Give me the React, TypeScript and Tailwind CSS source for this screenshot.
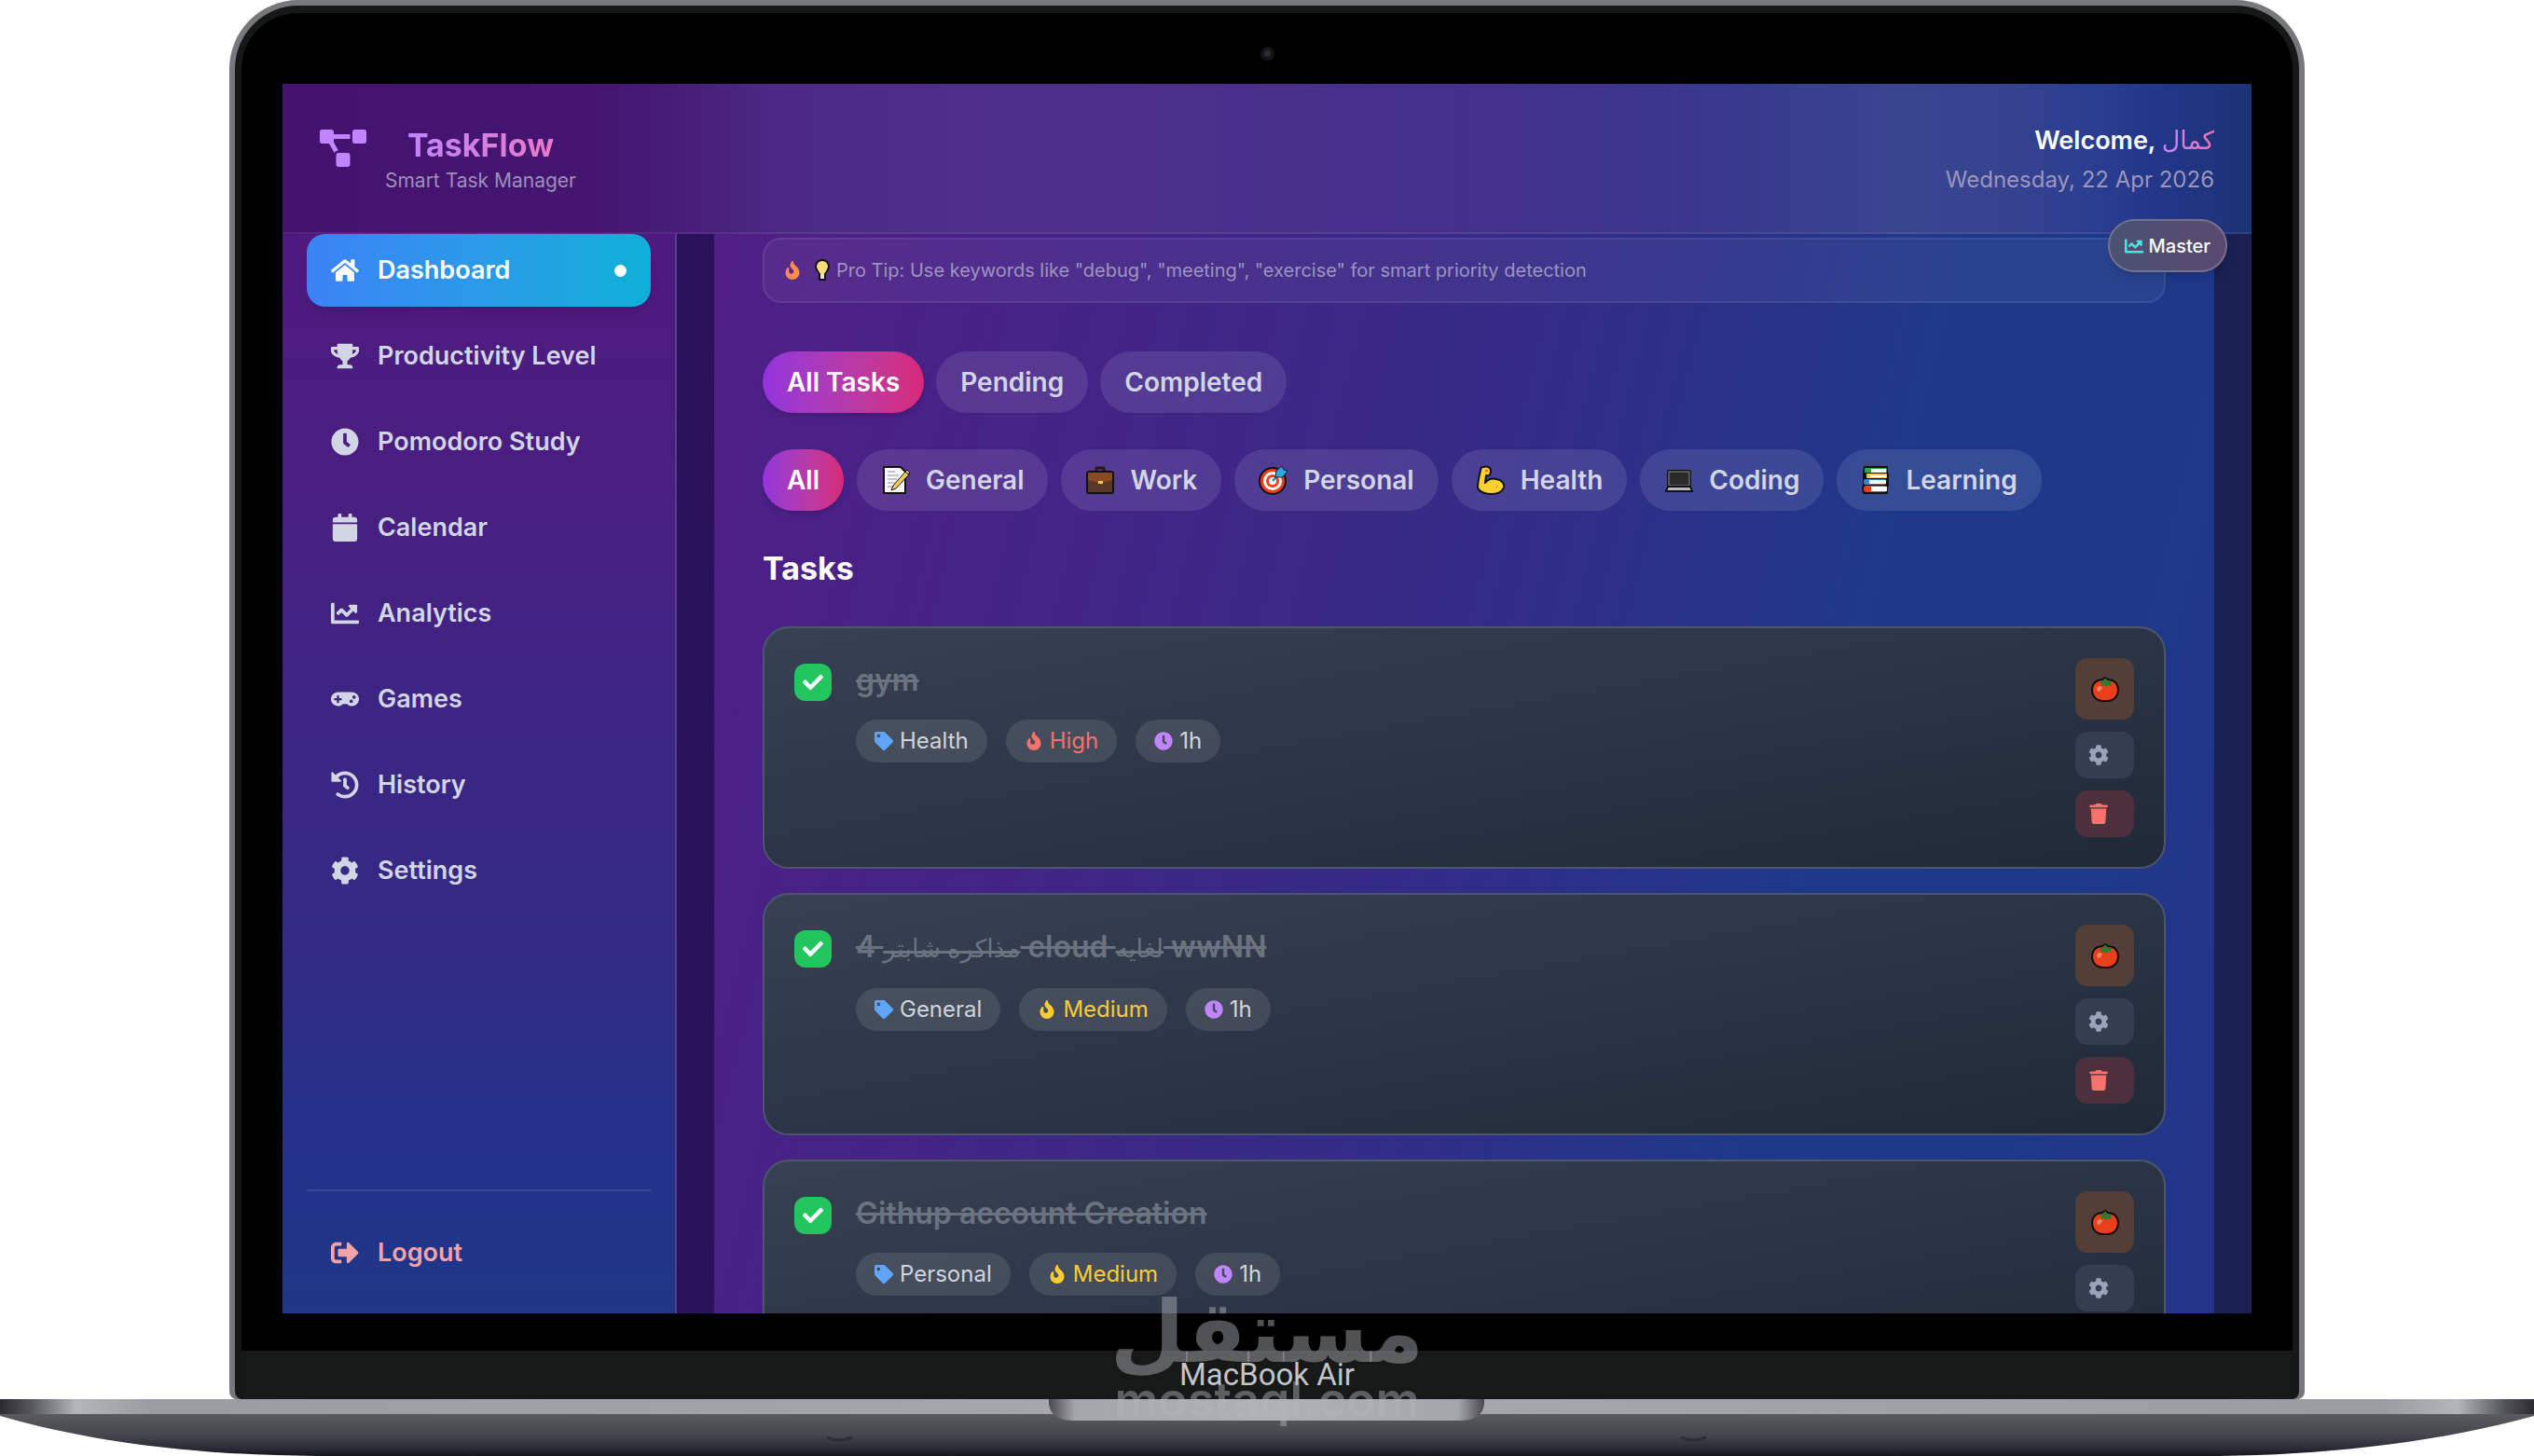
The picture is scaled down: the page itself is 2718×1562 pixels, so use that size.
import type { ReactNode } from "react";
import type { IconType } from "react-icons";
import {
	FaCalendar,
	FaChartLine,
	FaCheck,
	FaClock,
	FaCog,
	FaFire,
	FaGamepad,
	FaHistory,
	FaHome,
	FaProjectDiagram,
	FaSignOutAlt,
	FaTag,
	FaTrash,
	FaTrophy,
} from "react-icons/fa";

type NavItem = { label: string; icon: IconType; active?: boolean };

const navItems: NavItem[] = [
	{ label: "Dashboard", icon: FaHome, active: true },
	{ label: "Productivity Level", icon: FaTrophy },
	{ label: "Pomodoro Study", icon: FaClock },
	{ label: "Calendar", icon: FaCalendar },
	{ label: "Analytics", icon: FaChartLine },
	{ label: "Games", icon: FaGamepad },
	{ label: "History", icon: FaHistory },
	{ label: "Settings", icon: FaCog },
];

const statusFilters = ["All Tasks", "Pending", "Completed"];

const categories: { label: string; emoji?: ReactNode }[] = [
	{ label: "All" },
	{ label: "General", emoji: <MemoEmoji /> },
	{ label: "Work", emoji: <BriefcaseEmoji /> },
	{ label: "Personal", emoji: <TargetEmoji /> },
	{ label: "Health", emoji: <MuscleEmoji /> },
	{ label: "Coding", emoji: <LaptopEmoji /> },
	{ label: "Learning", emoji: <BooksEmoji /> },
];

type Task = {
	id: string;
	title: ReactNode;
	category: string;
	priority: "High" | "Medium";
	time: string;
};

const tasks: Task[] = [
	{ id: "t1", title: "gym", category: "Health", priority: "High", time: "1h" },
	{
		id: "t2",
		title: (
			<>
				4 <Arabic>مذاكره شابتر</Arabic> cloud <Arabic>لغايه</Arabic> wwNN
			</>
		),
		category: "General",
		priority: "Medium",
		time: "1h",
	},
	{
		id: "t3",
		title: "Githup account Creation",
		category: "Personal",
		priority: "Medium",
		time: "1h",
	},
];

function Arabic({ children }: { children: ReactNode }) {
	return (
		<span lang="ar" className="font-normal text-[27px]">
			{children}
		</span>
	);
}

function MemoEmoji() {
	return (
		<svg viewBox="0 0 32 32" className="size-8" aria-hidden="true">
			<path
				d="M3 2h18l5 5v23H3z"
				fill="#f7f7f7"
				stroke="#111"
				strokeWidth="2"
				strokeLinejoin="round"
			/>
			<path
				d="M7 7h8M7 11h12M7 15h10M7 19h8M7 23h6"
				stroke="#b3b7c4"
				strokeWidth="1.5"
			/>
			<path
				d="M11 27l2-5L27 6l4 3-15 16z"
				fill="#f2cf5b"
				stroke="#111"
				strokeWidth="1"
				strokeLinejoin="round"
			/>
			<path d="M26 7l2-2 3 3-2 2z" fill="#e9a08c" stroke="#111" />
		</svg>
	);
}

function BriefcaseEmoji() {
	return (
		<svg viewBox="0 0 32 32" className="size-8" aria-hidden="true">
			<path
				d="M12 7V3h8v4"
				fill="none"
				stroke="#2a1a14"
				strokeWidth="3"
				strokeLinejoin="round"
			/>
			<rect
				x="2"
				y="7"
				width="28"
				height="23"
				rx="2"
				fill="#573829"
				stroke="#111"
				strokeWidth="2"
			/>
			<path d="M3 8h26v8l-11 3h-4L3 16z" fill="#8a4b22" />
			<rect x="14" y="17" width="5" height="3" fill="#f6c84c" />
		</svg>
	);
}

function TargetEmoji() {
	return (
		<svg viewBox="0 0 32 32" className="size-8" aria-hidden="true">
			<circle
				cx="15"
				cy="17"
				r="14"
				fill="#e8401c"
				stroke="#111"
				strokeWidth="2"
			/>
			<circle cx="15" cy="17" r="10" fill="#fff" />
			<circle cx="15" cy="17" r="7" fill="#e8401c" />
			<circle cx="15" cy="17" r="4" fill="#fff" />
			<path d="M15 17l7-8" stroke="#1c7fb0" strokeWidth="2" />
			<path
				d="M18 13l1-7 6-5 2 4 4 1-5 7z"
				fill="#2fa8e0"
				stroke="#123"
				strokeWidth="1"
			/>
		</svg>
	);
}

function MuscleEmoji() {
	return (
		<svg viewBox="0 0 32 32" className="size-8" aria-hidden="true">
			<path
				d="M8 2c4-1 8 0 8 4 0 4-1 6-5 5l-1 8c3-4 8-5 12-4 6 1 9 5 8 9-2 5-8 7-14 7-7 0-13-3-14-7C2 18 4 10 5 6c0-2 1-4 3-4z"
				fill="#fccf33"
				stroke="#111"
				strokeWidth="2"
				strokeLinejoin="round"
			/>
			<path d="M10 6h3M22 23h1" stroke="#e8662a" strokeWidth="2" fill="none" />
		</svg>
	);
}

function LaptopEmoji() {
	return (
		<svg viewBox="0 0 32 32" className="size-8" aria-hidden="true">
			<rect
				x="4"
				y="6"
				width="24"
				height="17"
				rx="1"
				fill="#2b2b2b"
				stroke="#111"
				strokeWidth="2"
			/>
			<rect
				x="5"
				y="7"
				width="22"
				height="15"
				fill="none"
				stroke="#8f8f92"
				strokeWidth="1"
			/>
			<path
				d="M4 23h24l2 5H2z"
				fill="#b9b9bd"
				stroke="#111"
				strokeWidth="2"
				strokeLinejoin="round"
			/>
		</svg>
	);
}

function BooksEmoji() {
	return (
		<svg viewBox="0 0 32 32" className="size-8" aria-hidden="true">
			<path
				d="M4 2h24v7h1v5h-1v2h1v6h-1v8H3l-1-5 1-4V9z"
				fill="#111"
				stroke="#111"
				strokeWidth="2"
				strokeLinejoin="round"
			/>
			<rect x="4" y="3" width="24" height="5" rx="1" fill="#2ea44f" />
			<rect x="11" y="4" width="16" height="4" fill="#fff" />
			<rect x="6" y="9" width="22" height="5" rx="1" fill="#f6c84c" />
			<rect x="10" y="11" width="17" height="2" fill="#fff" />
			<rect x="3" y="15" width="24" height="6" rx="2" fill="#2f86e0" />
			<rect x="9" y="16" width="18" height="4" fill="#fff" />
			<rect x="3" y="22" width="25" height="7" rx="3" fill="#e8401c" />
			<rect x="11" y="23" width="17" height="5" fill="#fff" />
		</svg>
	);
}

function BulbEmoji() {
	return (
		<svg viewBox="0 0 16 24" className="h-6 w-4" aria-hidden="true">
			<path
				d="M8 1c4 0 7 3 7 7 0 3-2 5-4 8v6H5v-6C3 13 1 11 1 8c0-4 3-7 7-7z"
				fill="#fbdc7a"
				stroke="#111"
				strokeWidth="2"
			/>
			<path d="M6 17h4v4H6z" fill="#e4e4e4" />
		</svg>
	);
}

function TomatoEmoji() {
	return (
		<svg viewBox="0 0 30 28" className="h-7 w-[30px]" aria-hidden="true">
			<path
				d="M15 2l3 2 5 1c4 2 6 6 6 10 0 7-5 12-11 12h-6C6 27 1 22 1 15 1 11 3 7 7 5l5-1z"
				fill="#e8401c"
				stroke="#0b0b0b"
				strokeWidth="2"
				strokeLinejoin="round"
			/>
			<path
				d="M15 2l2 3 5 1-1 3 1 2-4-1-2 2-2-2-4 1 1-3-2-2 5-1z"
				fill="#2a7d2e"
			/>
			<path d="M6 13l3-2 3 1-2 4-3 1z" fill="#f4836c" />
		</svg>
	);
}

function Header() {
	return (
		<header className="relative z-10 flex h-[161px] shrink-0 items-center justify-between border-white/8 border-b-2 bg-[linear-gradient(90deg,#44136f_0%,#441671_16%,#461c78_20%,#4b2984_25%,#4f2f8c_36%,#44308a_60%,#38398c_74%,#3a4590_82%,#37438f_87%,#2b3d90_92%,#22378a_95%,#1c3275_100%)] px-10 pt-1">
			<div className="flex items-start gap-5">
				<FaProjectDiagram className="size-[50px] text-[#c084fc]" />
				<div className="flex flex-col items-center">
					<h1 className="bg-gradient-to-r from-[#c084fc] to-[#e878c4] bg-clip-text font-bold text-[34px] text-transparent leading-[44px]">
						TaskFlow
					</h1>
					<p className="text-[#9c8fb8] text-[21px] leading-8">
						Smart Task Manager
					</p>
				</div>
			</div>
			<div className="text-right">
				<p className="font-semibold text-[27px] text-white leading-[42px]">
					Welcome,{" "}
					<span
						lang="ar"
						className="bg-gradient-to-r from-[#c084fc] to-[#f472b6] bg-clip-text font-normal text-transparent"
					>
						كمال
					</span>
				</p>
				<p className="text-[#9c95bd] text-[24px] leading-[42px]">
					Wednesday, 22 Apr 2026
				</p>
			</div>
			<div className="absolute right-[26px] bottom-[-43px] flex h-[57px] items-center gap-[6px] rounded-full border-2 border-white/20 bg-gradient-to-r from-[#4a5272] to-[#5a4a70] px-4 shadow-lg">
				<FaChartLine className="size-5 text-[#4fe3e0]" />
				<span className="font-medium text-[20px] text-white">Master</span>
			</div>
		</header>
	);
}

function Sidebar() {
	return (
		<aside className="flex w-[423px] shrink-0 flex-col border-[#54408f] border-r-2 bg-[linear-gradient(180deg,#4e1a80_0%,#4a1e81_20%,#3d2583_45%,#312b85_68%,#23328a_86%,#1f3786_100%)] px-[26px]">
			<nav className="flex flex-col gap-[14px]">
				{navItems.map(({ label, icon: Icon, active }) => (
					<a
						key={label}
						href={`#${label}`}
						className={
							active
								? "flex h-[78px] items-center gap-5 rounded-[20px] bg-gradient-to-r from-[#3b82f6] to-[#0cb0d8] px-[26px] text-white shadow-lg"
								: "flex h-[78px] items-center gap-5 rounded-[20px] px-[26px] text-[#d1d5e4]"
						}
					>
						<Icon className="size-[30px] shrink-0" />
						<span className="font-semibold text-[27px]">{label}</span>
						{active && <span className="ml-auto size-[13px] rounded-full bg-white" />}
					</a>
				))}
			</nav>
			<div className="mt-auto border-white/10 border-t-2 pt-[27px] pb-[26px]">
				<a
					href="#logout"
					className="flex h-[78px] items-center gap-5 rounded-[20px] px-[26px] text-[#f5a3a8]"
				>
					<FaSignOutAlt className="size-[30px]" />
					<span className="font-semibold text-[27px]">Logout</span>
				</a>
			</div>
		</aside>
	);
}

function Pill({
	label,
	emoji,
	active,
}: {
	label: string;
	emoji?: ReactNode;
	active: boolean;
}) {
	return (
		<button
			type="button"
			className={
				active
					? "flex h-[66px] items-center gap-4 rounded-full bg-gradient-to-r from-[#9333dd] to-[#d82878] px-[26px] font-semibold text-[28px] text-white shadow-md"
					: "flex h-[66px] items-center gap-4 rounded-full bg-white/10 px-[26px] font-semibold text-[#d1d5e4] text-[28px]"
			}
		>
			{emoji}
			{label}
		</button>
	);
}

function Chip({ children }: { children: ReactNode }) {
	return (
		<span className="flex h-[46px] items-center gap-[7px] rounded-full bg-white/10 px-5 text-[#d1d5db] text-[24px]">
			{children}
		</span>
	);
}

function TaskCard({ task }: { task: Task }) {
	return (
		<article className="flex items-start gap-[26px] rounded-[28px] border-2 border-[#4d566b] bg-[linear-gradient(170deg,#374151_0%,#2c3546_50%,#1f2937_100%)] p-8">
			<div className="mt-[6px] grid size-10 shrink-0 place-items-center">
				<input
					id={task.id}
					type="checkbox"
					defaultChecked
					className="col-start-1 row-start-1 size-10 appearance-none rounded-[12px] bg-[#22c55e]"
				/>
				<FaCheck className="pointer-events-none col-start-1 row-start-1 size-[22px] text-white" />
			</div>
			<div className="flex-1">
				<h3
					dir="ltr"
					className="mb-[18px] font-semibold text-[#6b7280] text-[32px] leading-[48px] line-through"
				>
					<label htmlFor={task.id}>{task.title}</label>
				</h3>
				<div className="flex gap-5">
					<Chip>
						<FaTag className="size-5 text-[#60a5fa]" />
						{task.category}
					</Chip>
					<Chip>
						<span
							className={
								task.priority === "High"
									? "flex items-center gap-[7px] text-[#f8716c]"
									: "flex items-center gap-[7px] text-[#facc32]"
							}
						>
							<FaFire className="size-5" />
							{task.priority}
						</span>
					</Chip>
					<Chip>
						<FaClock className="size-5 text-[#c084fc]" />
						{task.time}
					</Chip>
				</div>
			</div>
			<div className="flex w-[63px] shrink-0 flex-col gap-[13px]">
				<button
					type="button"
					aria-label="Start pomodoro"
					className="grid h-[66px] place-items-center rounded-[13px] bg-[#543f38]"
				>
					<TomatoEmoji />
				</button>
				<button
					type="button"
					aria-label="Edit task"
					className="flex h-[50px] items-center rounded-[13px] bg-[#343e50] pl-[14px] text-[#9ca3b8]"
				>
					<FaCog className="size-[22px]" />
				</button>
				<button
					type="button"
					aria-label="Delete task"
					className="flex h-[50px] items-center rounded-[13px] bg-[#4c303c] pl-[14px] text-[#f8716c]"
				>
					<FaTrash className="size-[22px]" />
				</button>
			</div>
		</article>
	);
}

function TaskBoard() {
	return (
		<main className="min-w-0 flex-1 overflow-hidden bg-[linear-gradient(104deg,#501f86_0%,#432487_24%,#372a87_44%,#2d2f89_56%,#1f398a_71%,#1f398a_86%,#25348a_100%)] px-[52px] pt-1">
			<p className="flex h-[70px] items-center rounded-[20px] border-2 border-white/8 bg-white/5 px-5 text-[#9c95bd] text-[20px]">
				<FaFire className="mr-[14px] size-5 text-[#fb8a4b]" />
				<BulbEmoji />
				<span className="ml-[7px]">
					Pro Tip: Use keywords like "debug", "meeting", "exercise" for smart
					priority detection
				</span>
			</p>
			<div className="mt-[52px] flex gap-[13px]">
				{statusFilters.map((label, i) => (
					<Pill key={label} label={label} active={i === 0} />
				))}
			</div>
			<div className="mt-[39px] flex gap-[14px]">
				{categories.map(({ label, emoji }, i) => (
					<Pill key={label} label={label} emoji={emoji} active={i === 0} />
				))}
			</div>
			<h2 className="my-[39px] font-bold text-[34px] text-white leading-[46px]">
				Tasks
			</h2>
			<div className="flex flex-col gap-[26px]">
				{tasks.map((task) => (
					<TaskCard key={task.id} task={task} />
				))}
			</div>
		</main>
	);
}

function LaptopBase() {
	return (
		<svg
			viewBox="0 0 2718 61"
			preserveAspectRatio="none"
			className="h-[61px] w-full shrink-0"
			aria-hidden="true"
		>
			<defs>
				<linearGradient id="edge" x1="0" x2="1" y1="0" y2="0">
					<stop offset="0" stopColor="#2b2b30" />
					<stop offset="0.012" stopColor="#55565a" />
					<stop offset="0.03" stopColor="#b4b5b8" />
					<stop offset="0.06" stopColor="#9b9c9f" />
					<stop offset="0.5" stopColor="#a8a9ac" />
					<stop offset="0.94" stopColor="#9b9c9f" />
					<stop offset="0.97" stopColor="#b4b5b8" />
					<stop offset="0.988" stopColor="#55565a" />
					<stop offset="1" stopColor="#2b2b30" />
				</linearGradient>
				<linearGradient id="belly" x1="0" x2="0" y1="0" y2="1">
					<stop offset="0" stopColor="#5b5c61" />
					<stop offset="0.5" stopColor="#46474e" />
					<stop offset="0.85" stopColor="#282833" />
					<stop offset="1" stopColor="#15151b" />
				</linearGradient>
				<linearGradient id="notch" x1="0" x2="1" y1="0" y2="0">
					<stop offset="0" stopColor="#4a4a4e" />
					<stop offset="0.06" stopColor="#a5a6a9" />
					<stop offset="0.5" stopColor="#b0b1b5" />
					<stop offset="0.94" stopColor="#a5a6a9" />
					<stop offset="1" stopColor="#4a4a4e" />
				</linearGradient>
			</defs>
			<path
				d="M0 15H2718V18C2620 45 2500 60 2380 61H340C200 60 90 44 0 18z"
				fill="url(#belly)"
			/>
			<rect width="2718" height="16" fill="url(#edge)" />
			<path d="M1125 0H1592V5Q1590 23 1566 23H1150Q1127 22 1125 5z" fill="url(#notch)" />
			<path
				d="M887 41q13 6 27 0M1803 41q13 6 27 0"
				stroke="#2c2c34"
				strokeWidth="3"
				fill="none"
			/>
		</svg>
	);
}

export default function App() {
	return (
		<div className="relative flex h-screen flex-col overflow-hidden bg-white font-['Inter','DejaVu_Sans',sans-serif]">
			<div className="mx-[9.05%] flex min-h-0 flex-1 flex-col rounded-t-[74px] rounded-b-[8px] border-[#77787c] border-x-[6px] border-t-[6px] bg-[#77787c]">
				<div className="flex min-h-0 flex-1 flex-col overflow-hidden rounded-t-[68px] rounded-b-[8px] border-[#161818] border-x-[7px] border-t-[8px] bg-black">
					<div className="flex h-[76px] shrink-0 justify-center pt-9">
						<span className="size-[15px] rounded-full border-4 border-[#141416] bg-[#2b2b33]" />
					</div>
					<div className="mx-11 flex min-h-0 flex-1 flex-col overflow-hidden bg-[#2a115c]">
						<Header />
						<div className="flex min-h-0 flex-1">
							<Sidebar />
							<div className="w-10 shrink-0 bg-[#2a115c]" />
							<TaskBoard />
							<div className="w-10 shrink-0 bg-[#1a2050]" />
						</div>
					</div>
					<div className="mt-10 flex h-[52px] shrink-0 items-center justify-center bg-[#171918] font-['Roboto',sans-serif] text-[#c3c4ca] text-[33px]">
						MacBook Air
					</div>
				</div>
			</div>
			<LaptopBase />
			<div className="pointer-events-none absolute inset-x-0 bottom-9 flex flex-col items-center font-['DejaVu_Sans',sans-serif] font-bold text-[#b4b5ba]/45">
				<span lang="ar" className="text-[92px] leading-[96px]">
					مستقل
				</span>
				<span className="font-['Inter',sans-serif] font-semibold text-[52px] leading-[48px]">
					mostaql.com
				</span>
			</div>
		</div>
	);
}
